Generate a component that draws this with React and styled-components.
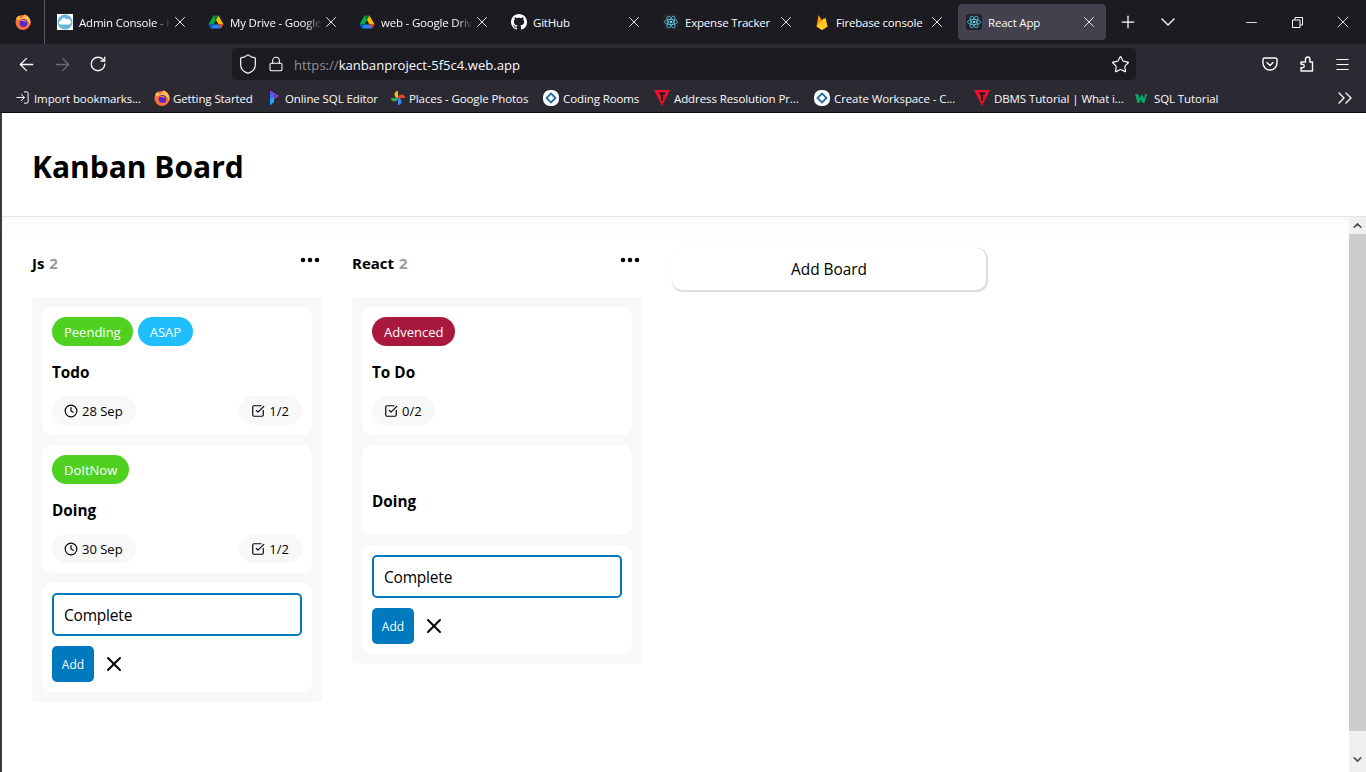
import React from 'react';
import styled, { createGlobalStyle } from 'styled-components';
import {
  ArrowLeft, ArrowRight, RotateCw, Shield, Lock, Star, X, Plus, ChevronDown, Minus,
  Menu, ChevronsRight, Clock, CheckSquare, MoreHorizontal, ChevronUp, LogIn,
} from 'lucide-react';

const Global = createGlobalStyle`
  html, body { margin: 0; padding: 0; height: 100%; overflow: hidden; }
  body { font-family: "Open Sans", "Noto Sans", sans-serif; background: #fff; }
`;

const Shell = styled.div`
  width: 1366px;
  height: 772px;
  display: flex;
  flex-direction: column;
  overflow: hidden;
  font-family: "Open Sans", "Noto Sans", sans-serif;
`;

/* browser chrome */
const TabBar = styled.div`
  height: 44px;
  background: #1c1b22;
  display: flex;
  align-items: center;
  color: #fbfbfe;
  padding-left: 2px;
`;
const FoxSlot = styled.div`
  width: 42px;
  height: 44px;
  border-right: 1px solid #5b5b66;
  display: flex;
  align-items: center;
  justify-content: center;
`;
const Tabs = styled.div`
  display: flex;
  align-items: center;
  margin-left: 4px;
`;
const Tab = styled.div`
  width: 148px;
  height: 36px;
  margin-right: ${p => p.$space}px;
  border-radius: 4px;
  background: ${p => (p.$active ? '#42414d' : 'transparent')};
  display: flex;
  align-items: center;
  padding: 0 8px;
  box-sizing: border-box;
  flex-shrink: 0;
`;
const TabIcon = styled.span`
  width: 16px;
  height: 16px;
  margin-right: 6px;
  display: flex;
  flex-shrink: 0;
`;
const TabTitle = styled.span`
  flex: 1;
  min-width: 0;
  font-size: 11.5px;
  letter-spacing: -0.2px;
  white-space: nowrap;
  ${p => p.$fade && 'mask-image: linear-gradient(to right, #000 82%, transparent);'}
`;
const TabClose = styled(X)`
  width: 18px;
  height: 18px;
  flex-shrink: 0;
  stroke-width: 1.2;
`;
const TabAction = styled.div`
  width: 40px;
  height: 36px;
  margin-left: ${p => p.$space || 0}px;
  display: flex;
  align-items: center;
  justify-content: center;
`;
const WindowButtons = styled.div`
  margin-left: auto;
  display: flex;
  align-items: center;
`;
const WindowButton = styled.div`
  width: 46px;
  height: 44px;
  display: flex;
  align-items: center;
  justify-content: center;
`;

const NavBar = styled.div`
  height: 40px;
  background: #2b2a33;
  display: flex;
  align-items: center;
  color: #fbfbfe;
  padding-left: 8px;
  box-sizing: border-box;
`;
const NavButton = styled.div`
  width: 36px;
  height: 32px;
  display: flex;
  align-items: center;
  justify-content: center;
  color: ${p => (p.$off ? '#6e6d75' : '#fbfbfe')};
`;
const UrlBar = styled.div`
  width: 904px;
  height: 32px;
  margin-left: 116px;
  margin-right: 116px;
  background: #1c1b22;
  border-radius: 4px;
  display: flex;
  align-items: center;
  padding: 0 6px 0 5px;
  box-sizing: border-box;
  gap: 9px;
`;
const UrlText = styled.div`
  flex: 1;
  font-size: 13.1px;
  color: #fbfbfe;
  margin-left: 1px;
  padding-top: 1px;
  span { color: #8f8f9d; }
`;
const NavRight = styled.div`
  display: flex;
  align-items: center;
`;

const BookmarkBar = styled.div`
  height: 28px;
  background: #2b2a33;
  border-bottom: 1px solid #0c0c0d;
  display: flex;
  align-items: center;
  padding: 0 9px 0 15px;
  color: #fbfbfe;
`;
const Bookmark = styled.div`
  width: ${p => p.$w}px;
  display: flex;
  align-items: center;
  gap: ${p => p.$gap}px;
  font-size: 11.5px;
  letter-spacing: -0.1px;
  white-space: nowrap;
  flex-shrink: 0;
`;
const BookmarkIcon = styled.span`
  width: 16px;
  height: 16px;
  display: flex;
  flex-shrink: 0;
`;
const Overflow = styled.div`
  margin-left: auto;
  display: flex;
`;

/* the page */
const Page = styled.div`
  flex: 1;
  min-height: 0;
  display: flex;
  flex-direction: column;
  background: #fff;
  border-left: 2px solid #3a3a3a;
`;
const Header = styled.header`
  height: 104px;
  flex-shrink: 0;
  border-bottom: 1px solid #e4e4e4;
  display: flex;
  align-items: center;
  padding: 3px 0 0 30px;
  box-sizing: border-box;
`;
const Title = styled.h1`
  margin: 0;
  font-size: 30px;
  font-weight: 700;
  color: #000;
`;
const Body = styled.div`
  flex: 1;
  min-height: 0;
  display: flex;
`;
const Outer = styled.div`
  flex: 1;
  min-width: 0;
  background: linear-gradient(#fafafa, #fff 19px);
  padding: 30px 30px 0;
  display: flex;
  align-items: flex-start;
  gap: 30px;
`;
const Scrollbar = styled.div`
  width: 17px;
  display: flex;
  flex-direction: column;
  background: #f0f0f0;
  flex-shrink: 0;
`;
const ScrollArrow = styled.div`
  height: 17px;
  margin-top: ${p => p.$top || 0}px;
  display: flex;
  align-items: center;
  justify-content: center;
  color: #505050;
`;
const ScrollThumb = styled.div`
  height: 497px;
  background: #cdcdcd;
`;

const Column = styled.section`
  width: 290px;
  flex-shrink: 0;
`;
const ColumnHead = styled.div`
  height: 50px;
  display: flex;
  justify-content: space-between;
  align-items: flex-start;
`;
const ColumnName = styled.div`
  font-size: 15px;
  font-weight: 700;
  color: #000;
  line-height: 20px;
  margin-top: 6px;
  word-spacing: 1px;
  span { color: #999; }
`;
const MoreIcon = styled(MoreHorizontal)`
  width: 24px;
  height: 24px;
  margin-top: 1px;
  stroke-width: 2.6;
  color: #000;
`;
const Panel = styled.div`
  background: #f8f8f8;
  border-radius: 5px;
  padding: 10px;
  display: flex;
  flex-direction: column;
  gap: 10px;
`;
const Card = styled.article`
  background: #fff;
  border-radius: 10px;
  padding: 10px;
  min-height: ${p => p.$minH || 0}px;
  box-sizing: border-box;
  display: flex;
  flex-direction: column;
  gap: 14px;
`;
const Labels = styled.div`
  display: flex;
  gap: 5px;
`;
const Label = styled.span`
  height: 29px;
  padding: 0 12px;
  border-radius: 15px;
  background: ${p => p.$bg};
  color: #fff;
  font-size: 13px;
  display: flex;
  align-items: center;
`;
const CardTitle = styled.div`
  font-size: 15.3px;
  font-weight: 700;
  color: #000;
  padding-top: 2px;
  line-height: 20px;
  margin-top: ${p => p.$top || 0}px;
`;
const Meta = styled.div`
  display: flex;
  justify-content: space-between;
`;
const Chip = styled.div`
  height: 29px;
  padding: 0 13px 0 12px;
  border-radius: 15px;
  background: #f8f8f8;
  color: #000;
  font-size: 13px;
  display: flex;
  align-items: center;
  gap: 4px;
  svg { width: 14px; height: 14px; stroke-width: 2; }
`;
const Input = styled.input`
  height: 43px;
  width: 100%;
  box-sizing: border-box;
  border: 2px solid #0079bf;
  border-radius: 5px;
  padding: 0 10px;
  font: inherit;
  font-size: 15.5px;
  letter-spacing: -0.2px;
  color: #000;
  outline: none;
`;
const FormCard = styled(Card)`
  gap: 10px;
`;
const FormRow = styled.div`
  display: flex;
  align-items: center;
  gap: 8px;
`;
const AddButton = styled.button`
  width: 42px;
  height: 36px;
  border: 0;
  border-radius: 5px;
  background: #0079bf;
  color: #fff;
  font: inherit;
  font-size: 12px;
  padding: 0;
`;
const CloseIcon = styled(X)`
  width: 24px;
  height: 24px;
  stroke-width: 2;
  color: #000;
`;
const AddBoard = styled.button`
  width: 314px;
  height: 42px;
  margin-top: 1px;
  border: 0;
  border-radius: 10px;
  background: #fff;
  box-shadow: 1px 1px 1px 1px #dcdcdc;
  font: inherit;
  font-size: 15.4px;
  color: #000;
  flex-shrink: 0;
`;

/* small drawings */
const Firefox = () => (
  <svg width="16" height="16" viewBox="0 0 16 16">
    <circle cx="8" cy="8.500" r="7.500" fill="#ff7139" />
    <path d="M1 5C2 2.500 3.500 2 4 1.500 4 3 5 4 6 4.500 8 3 9.500 2 9 .5c3.500.5 6.500 3.500 6.500 8 0 1-.2 2-.6 2.800C14.500 8 12 5.500 8 5.500 5 5.500 2.500 6.500 1 5z" fill="#ffbd4f" />
    <circle cx="8.500" cy="9" r="3.900" fill="#592acb" />
    <path d="M5 6.500c2-1.500 5-1 6.500 1.500-2-1-4.500-1.200-6.500-1.500z" fill="#ff980e" />
  </svg>
);
const Cloud = () => (
  <svg width="16" height="16" viewBox="0 0 16 16">
    <rect width="16" height="16" fill="#fff" />
    <circle cx="8" cy="8" r="7.500" fill="#6cb4d8" />
    <path d="M3.500 10.500a2 2 0 0 1 .5-4 3 3 0 0 1 5.500-1 2.500 2.500 0 0 1 3 5z" fill="#fff" />
  </svg>
);
const Drive = () => (
  <svg width="16" height="16" viewBox="0 0 16 16">
    <path d="M5.500 1.500 8 6l-2.500 4.500h-5z" fill="#00ac47" />
    <path d="M5.500 1.500h5L8 6z" fill="#00832d" />
    <path d="M10.500 1.500l5 9h-5L8 6z" fill="#ffba00" />
    <path d="M.5 10.500h5L3 14.500z" fill="#0066da" />
    <path d="M5.500 10.500h5L13 14.500H3z" fill="#2684fc" />
    <path d="M10.500 10.500h5L13 14.500z" fill="#ea4335" />
  </svg>
);
const GitHubMark = () => (
  <svg width="16" height="16" viewBox="0 0 16 16">
    <path fill="#fff" d="M8 0C3.580 0 0 3.580 0 8c0 3.540 2.290 6.530 5.470 7.590.4.070.55-.17.55-.38 0-.19-.01-.82-.01-1.490-2.010.37-2.530-.49-2.690-.94-.09-.23-.48-.94-.82-1.130-.28-.15-.68-.52-.01-.53.63-.01 1.080.58 1.230.82.72 1.210 1.870.87 2.330.66.07-.52.28-.87.51-1.070-1.780-.2-3.640-.89-3.640-3.950 0-.87.31-1.590.82-2.150-.08-.2-.36-1.020.08-2.120 0 0 .67-.21 2.200.82.64-.18 1.320-.27 2-.27s1.360.09 2 .27c1.530-1.040 2.200-.82 2.200-.82.44 1.100.16 1.920.08 2.120.51.56.82 1.270.82 2.150 0 3.070-1.870 3.750-3.650 3.950.29.25.54.73.54 1.480 0 1.070-.01 1.930-.01 2.200 0 .21.15.46.55.38A8.010 8.010 0 0 0 16 8c0-4.420-3.580-8-8-8z" />
  </svg>
);
const ReactMark = () => (
  <svg width="16" height="16" viewBox="0 0 16 16">
    <rect width="16" height="16" rx="2" fill="#20232a" />
    <g fill="none" stroke="#61dafb" strokeWidth="0.7">
      <ellipse cx="8" cy="8" rx="6.500" ry="2.600" />
      <ellipse cx="8" cy="8" rx="6.500" ry="2.600" transform="rotate(60 8 8)" />
      <ellipse cx="8" cy="8" rx="6.500" ry="2.600" transform="rotate(120 8 8)" />
    </g>
    <circle cx="8" cy="8" r="1.300" fill="#61dafb" />
  </svg>
);
const FirebaseMark = () => (
  <svg width="16" height="16" viewBox="0 0 16 16">
    <path d="M2.500 12.500 4.500 1 8 6.500 9.500 4l4 8.500L8 16z" fill="#ffa000" />
    <path d="M2.500 12.500 8 16l5.500-3.500-2-9-2 2L8 7z" fill="#ffca28" />
  </svg>
);
const Prisma = () => (
  <svg width="16" height="16" viewBox="0 0 16 16">
    <path d="M4 0.500 13 6 8 9V7l2-1-6-3.500z" fill="#8b3dff" />
    <path d="M4 2.500V9l4-2V5z" fill="#3d6dff" />
    <path d="M4 9l4-2v5l-4 3.500z" fill="#1ea7fd" />
  </svg>
);
const Photos = () => (
  <svg width="16" height="16" viewBox="0 0 16 16">
    <path d="M8 8V1a3.500 3.500 0 0 0-3.500 3.500C4.500 6.500 6 8 8 8z" fill="#fbbc04" />
    <path d="M8 8h7a3.500 3.500 0 0 0-3.500-3.500C9.500 4.500 8 6 8 8z" fill="#ea4335" />
    <path d="M8 8v7a3.500 3.500 0 0 0 3.500-3.500C11.500 9.500 10 8 8 8z" fill="#4285f4" />
    <path d="M8 8H1a3.500 3.500 0 0 0 3.500 3.500C6.500 11.500 8 10 8 8z" fill="#34a853" />
  </svg>
);
const Rooms = () => (
  <svg width="16" height="16" viewBox="0 0 16 16">
    <rect width="16" height="16" rx="7" fill="#fff" />
    <path d="M8 3.500 12.500 8 8 12.500 3.500 8z" fill="none" stroke="#1d6f9f" strokeWidth="1.800" />
  </svg>
);
const Triangle = () => (
  <svg width="16" height="16" viewBox="0 0 16 16">
    <path d="M0 0h16L8 16z" fill="#e8112d" />
    <path d="M5 3.500h6M8 3.500v7" stroke="#111" strokeWidth="1.800" fill="none" />
  </svg>
);
const W3 = () => (
  <svg width="16" height="16" viewBox="0 0 16 16">
    <path d="M1 4h3l1.500 5L8 4l2 5 1-5h2l-2.500 9H8.500L7 9.500 5 13H3.500z" fill="#04aa6d" />
  </svg>
);
const Pocket = () => (
  <svg width="16" height="16" viewBox="0 0 16 16" fill="none" stroke="#fbfbfe" strokeWidth="1.400">
    <path d="M2.500 2h11A1.500 1.500 0 0 1 15 3.500V7A7 7 0 0 1 1 7V3.500A1.500 1.500 0 0 1 2.500 2z" />
    <path d="M5 6.500 8 9.500l3-3" strokeLinecap="round" />
  </svg>
);
const Extensions = () => (
  <svg width="16" height="16" viewBox="0 0 16 16" fill="none" stroke="#fbfbfe" strokeWidth="1.400" strokeLinejoin="round">
    <path d="M7.500 6V3.200a2.200 2.200 0 0 1 4.400 0V6H14.500v9H3v-3.200h1.500a1.800 1.800 0 0 0 0-3.600H3V6z" />
  </svg>
);
const Restore = () => (
  <svg width="11" height="11" viewBox="0 0 11 11" fill="none" stroke="#fbfbfe">
    <path d="M.5 3h7.500v7.500H.5z M3 3V.5h7.500V8H8" />
  </svg>
);

const tabs = [
  { space: 3, icon: <Cloud />, title: 'Admin Console - I', fade: true },
  { space: 3, icon: <Drive />, title: 'My Drive - Google', fade: true },
  { space: 4, icon: <Drive />, title: 'web - Google Driv', fade: true },
  { space: 4, icon: <GitHubMark />, title: 'GitHub' },
  { space: 3, icon: <ReactMark />, title: 'Expense Tracker' },
  { space: 4, icon: <FirebaseMark />, title: 'Firebase console' },
  { space: 0, icon: <ReactMark />, title: 'React App', active: true },
];

const bookmarks = [
  { w: 139, gap: 3, icon: <LogIn size={15} strokeWidth={1.6} />, title: 'Import bookmarks...' },
  { w: 112, gap: 3, icon: <Firefox />, title: 'Getting Started' },
  { w: 124, gap: 3, icon: <Prisma />, title: 'Online SQL Editor' },
  { w: 153, gap: 3, icon: <Photos />, title: 'Places - Google Photos' },
  { w: 111, gap: 4, icon: <Rooms />, title: 'Coding Rooms' },
  { w: 160, gap: 4, icon: <Triangle />, title: 'Address Resolution Pr...' },
  { w: 160, gap: 4, icon: <Rooms />, title: 'Create Workspace - C...' },
  { w: 160, gap: 4, icon: <Triangle />, title: 'DBMS Tutorial | What i...' },
  { w: 100, gap: 4, icon: <W3 />, title: 'SQL Tutorial' },
];

const TaskCard = ({ labels = [], title, date, tasks, titleTop, minH }) => (
  <Card $minH={minH}>
    {labels.length > 0 && (
      <Labels>
        {labels.map(l => <Label key={l.text} $bg={l.color}>{l.text}</Label>)}
      </Labels>
    )}
    <CardTitle $top={titleTop}>{title}</CardTitle>
    {tasks && (
      <Meta>
        {date ? <Chip><Clock />{date}</Chip> : null}
        <Chip><CheckSquare />{tasks}</Chip>
      </Meta>
    )}
  </Card>
);

const AddForm = () => (
  <FormCard>
    <Input defaultValue="Complete" />
    <FormRow>
      <AddButton>Add</AddButton>
      <CloseIcon />
    </FormRow>
  </FormCard>
);

export default function App() {
  return (
    <Shell>
      <Global />
      <TabBar>
        <FoxSlot><Firefox /></FoxSlot>
        <Tabs>
          {tabs.map(t => (
            <Tab key={t.title} $space={t.space} $active={t.active}>
              <TabIcon>{t.icon}</TabIcon>
              <TabTitle $fade={t.fade}>{t.title}</TabTitle>
              <TabClose />
            </Tab>
          ))}
        </Tabs>
        <TabAction $space={2}><Plus size={20} strokeWidth={1.5} /></TabAction>
        <TabAction><ChevronDown size={24} strokeWidth={1.4} /></TabAction>
        <WindowButtons>
          <WindowButton><Minus size={17} strokeWidth={1.2} /></WindowButton>
          <WindowButton><Restore /></WindowButton>
          <WindowButton><X size={20} strokeWidth={1} /></WindowButton>
        </WindowButtons>
      </TabBar>
      <NavBar>
        <NavButton><ArrowLeft size={21} strokeWidth={1.5} /></NavButton>
        <NavButton $off><ArrowRight size={21} strokeWidth={1.5} /></NavButton>
        <NavButton><RotateCw size={18} strokeWidth={1.7} /></NavButton>
        <UrlBar>
          <Shield size={22} strokeWidth={1.3} />
          <Lock size={16} strokeWidth={1.6} />
          <UrlText><span>https://</span>kanbanproject-5f5c4.web.app</UrlText>
          <Star size={19} strokeWidth={1.5} />
        </UrlBar>
        <NavRight>
          <NavButton><Pocket /></NavButton>
          <NavButton><Extensions /></NavButton>
          <NavButton><Menu size={17} strokeWidth={1.5} /></NavButton>
        </NavRight>
      </NavBar>
      <BookmarkBar>
        {bookmarks.map(b => (
          <Bookmark key={b.title} $w={b.w} $gap={b.gap}>
            <BookmarkIcon>{b.icon}</BookmarkIcon>
            {b.title}
          </Bookmark>
        ))}
        <Overflow><ChevronsRight size={24} strokeWidth={1.4} /></Overflow>
      </BookmarkBar>
      <Page>
        <Header><Title>Kanban Board</Title></Header>
        <Body>
          <Outer>
            <Column>
              <ColumnHead>
                <ColumnName>Js <span>2</span></ColumnName>
                <MoreIcon />
              </ColumnHead>
              <Panel>
                <TaskCard
                  labels={[{ text: 'Peending', color: '#4fd121' }, { text: 'ASAP', color: '#1ebffa' }]}
                  title="Todo"
                  date="28 Sep"
                  tasks="1/2"
                />
                <TaskCard labels={[{ text: 'DoItNow', color: '#4fd121' }]} title="Doing" date="30 Sep" tasks="1/2" />
                <AddForm />
              </Panel>
            </Column>
            <Column>
              <ColumnHead>
                <ColumnName>React <span>2</span></ColumnName>
                <MoreIcon />
              </ColumnHead>
              <Panel>
                <TaskCard labels={[{ text: 'Advenced', color: '#a8193d' }]} title="To Do" tasks="0/2" />
                <TaskCard title="Doing" titleTop={34} minH={90} />
                <AddForm />
              </Panel>
            </Column>
            <AddBoard>Add Board</AddBoard>
          </Outer>
          <Scrollbar>
            <ScrollArrow><ChevronUp size={13} strokeWidth={3} /></ScrollArrow>
            <ScrollThumb />
            <ScrollArrow $top={20}><ChevronDown size={13} strokeWidth={3} /></ScrollArrow>
          </Scrollbar>
        </Body>
      </Page>
    </Shell>
  );
}
